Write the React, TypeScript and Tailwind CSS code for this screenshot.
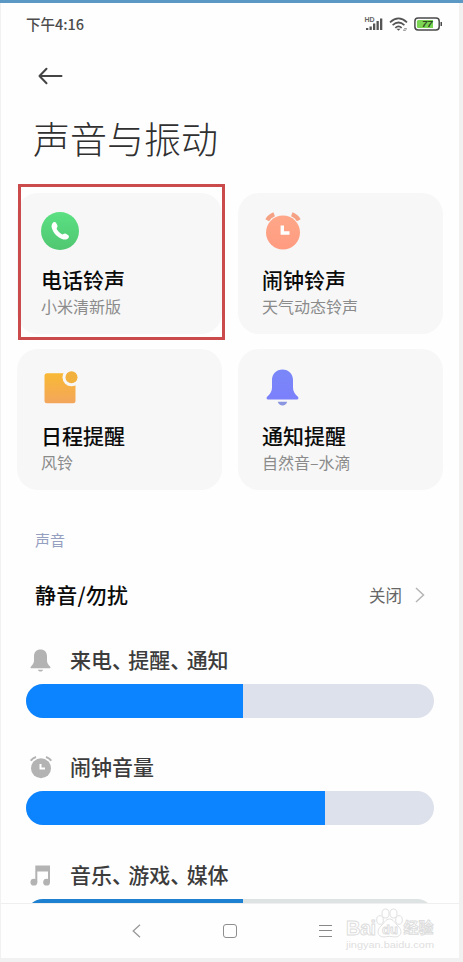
import type { ReactNode } from 'react'

function PhoneIcon() {
  return (
    <svg width="38" height="38" viewBox="0 0 38 38">
      <defs>
        <linearGradient id="phone" x1="0" y1="0" x2="0" y2="1">
          <stop offset="0" stopColor="#5be083" />
          <stop offset="1" stopColor="#50c771" />
        </linearGradient>
      </defs>
      <circle cx="19" cy="19" r="19" fill="url(#phone)" />
      <path
        d="M12.200 10.600c1-.8 2.400-.6 3.100.6l1 2c.5 1 .1 1.800-.4 2.500-.4.7-.3 1.200.1 1.900 1.100 1.900 2.600 3.400 4.500 4.500.7.4 1.200.4 1.900 0 .8-.5 1.600-.8 2.500-.3l2 1.100c1.200.7 1.400 2 .5 3-1.200 1.400-3 2-4.900 1.500-5.700-1.700-9.900-5.900-11.700-11.500-.7-2 .1-4 1.400-5.300z"
        fill="#fff"
      />
    </svg>
  )
}

function ClockIcon() {
  return (
    <svg width="36" height="38" viewBox="0 0 36 38">
      <defs>
        <linearGradient id="clock" x1="0" y1="0" x2="0" y2="1">
          <stop offset="0" stopColor="#ffa788" />
          <stop offset="1" stopColor="#ff9b80" />
        </linearGradient>
      </defs>
      <circle cx="18" cy="20.500" r="17" fill="url(#clock)" />
      <path d="M2.200 8.200Q4.600 4 9.200 2.300" fill="none" stroke="#f5a284" strokeWidth="4.200" />
      <path d="M26.800 2.300Q31.400 4 33.800 8.200" fill="none" stroke="#f5a284" strokeWidth="4.200" />
      <path d="M17.300 13.500V21H24.500" fill="none" stroke="#fff" strokeWidth="3.400" />
    </svg>
  )
}

function NoteIcon() {
  return (
    <svg width="34" height="33" viewBox="0 0 34 33">
      <defs>
        <linearGradient id="note" x1="0" y1="0" x2="0" y2="1">
          <stop offset="0" stopColor="#f9b934" />
          <stop offset="1" stopColor="#f3a65c" />
        </linearGradient>
      </defs>
      <rect x="0.500" y="2.200" width="31" height="30" rx="2.500" fill="url(#note)" />
      <circle cx="27.500" cy="6.300" r="9" fill="#f7f7f7" />
      <circle cx="27.500" cy="6.300" r="6" fill="#f2b03c" />
    </svg>
  )
}

function BellIcon() {
  return (
    <svg width="33" height="37" viewBox="0 0 33 37">
      <defs>
        <linearGradient id="bell" x1="0" y1="0" x2="0" y2="1">
          <stop offset="0" stopColor="#7a87f8" />
          <stop offset="1" stopColor="#7b80fb" />
        </linearGradient>
      </defs>
      <path
        d="M16.500.5C22.600.5 27 5 27 11v7.500c0 4 1.800 6.300 4.900 9.300 1 1.200.6 2.700-1 2.700H2.100c-1.600 0-2-1.500-1-2.700C4.200 24.800 6 22.500 6 18.500V11C6 5 10.400.5 16.500.5z"
        fill="url(#bell)"
      />
      <path d="M11.800 32.800h9.400c-.8 2.500-2.500 3.700-4.700 3.700s-3.900-1.200-4.700-3.700z" fill="#8a96e0" />
    </svg>
  )
}

function SmallBell() {
  return (
    <svg width="21" height="23" viewBox="0 0 21 23">
      <path
        d="M10.500.5C14.400.5 17 3.200 17 7v4.500c0 2.600 1.200 4.200 3.200 6.200.6.700.3 1.600-.7 1.600h-18c-1 0-1.300-.9-.7-1.600C2.800 15.700 4 14.100 4 11.500V7C4 3.200 6.600.5 10.500.5z"
        fill="#b3b3b3"
      />
      <path d="M7.800 20.700h5.400c-.5 1.200-1.400 1.800-2.700 1.800s-2.200-.6-2.700-1.800z" fill="#b3b3b3" />
    </svg>
  )
}

function SmallClock() {
  return (
    <svg width="22" height="23" viewBox="0 0 22 23">
      <circle cx="11" cy="12.300" r="10" fill="#b3b3b3" />
      <path d="M.8 4.700Q2.500 2.200 6 1M16 1Q19.500 2.200 21.200 4.700" fill="none" stroke="#b3b3b3" strokeWidth="2" />
      <path d="M10.500 8V12.600H15" fill="none" stroke="#fff" strokeWidth="2" />
    </svg>
  )
}

function SmallMusic() {
  return (
    <svg width="21" height="21" viewBox="0 0 21 21">
      <path d="M5.300.5H20V17h-2V6.500H7.300V17h-2z" fill="#b3b3b3" />
      <circle cx="3.900" cy="17.200" r="3.400" fill="#b3b3b3" />
      <circle cx="16.600" cy="17.200" r="3.400" fill="#b3b3b3" />
    </svg>
  )
}

function StatusBar() {
  return (
    <div className="flex h-[42px] items-center justify-between pl-[25px] pr-[16px]">
      <span className="text-[14.500px] font-medium text-[#4c4c4c]">下午4:16</span>
      <svg width="79" height="26" viewBox="-1 -4 79 26">
        <text x="-0.500" y="6.500" fontSize="7" fontWeight="700" fontFamily="Liberation Sans" fill="#666">HD</text>
        <g fill="#555">
          <rect x="1" y="13" width="2.300" height="2" />
          <rect x="4.500" y="11.500" width="2.300" height="3.500" />
          <rect x="8" y="8.500" width="2.300" height="6.500" />
          <rect x="11.500" y="6" width="2.300" height="9" />
          <rect x="15" y="3.500" width="2.300" height="11.500" />
        </g>
        <g fill="none" stroke="#555" strokeWidth="1.700">
          <path d="M25 7.300Q33.500-.4 42 7.300" />
          <path d="M27.600 10.100Q33.500 4.900 39.400 10.100" />
          <path d="M30.300 12.800Q33.500 10 36.700 12.800" />
        </g>
        <path d="M31.500 13.800h4l-2 2z" fill="#555" />
        <path d="M38.500 15.500l1-2h2l-1 2z" fill="none" stroke="#777" strokeWidth="0.700" />
        <rect x="49.900" y="3" width="24.300" height="12" rx="3.200" fill="#fff" stroke="#4a4a4a" strokeWidth="1.500" />
        <path d="M53.400 5h14.600v8H53.400a1.500 1.500 0 0 1-1.500-1.500v-5A1.500 1.500 0 0 1 53.400 5z" fill="#7ad552" />
        <rect x="75.500" y="7" width="1.500" height="4" fill="#4a4a4a" />
        <text x="57" y="12.400" fontSize="9.500" fontWeight="700" fontStyle="italic" fontFamily="Liberation Sans" fill="#2f4a22">77</text>
      </svg>
    </div>
  )
}

type CardProps = { icon: ReactNode; title: string; sub: string; selected?: boolean }

function Card({ icon, title, sub, selected }: CardProps) {
  return (
    <div className="relative h-[140.500px] rounded-[21px] bg-[#f7f7f7] pl-6">
      <div className="flex h-[76px] items-center">{icon}</div>
      <div className="h-[24px] text-[21px] font-medium leading-[21px] text-[#0b0b0b]">{title}</div>
      <div className="text-[16px] leading-[27px] text-[#8b8b8b]">{sub}</div>
      {selected && <div className="absolute -top-[9px] left-px h-[156px] w-[207px] border-[3px] border-[#cb4a4b]" />}
    </div>
  )
}

const volumes = [
  { icon: <SmallBell />, words: ['来电', '提醒', '通知'], value: 53.300, fill: 'bg-[#0d84ff]', track: 'bg-[#dde1eb]' },
  { icon: <SmallClock />, words: ['闹钟音量'], value: 73.300, fill: 'bg-[#0d84ff]', track: 'bg-[#dde1eb]' },
  { icon: <SmallMusic />, words: ['音乐', '游戏', '媒体'], value: 53.300, fill: 'bg-[#1d80d0]', track: 'bg-[#dde3e2]' },
]

function Watermark() {
  return (
    <svg className="absolute right-[20px] top-[2px]" width="94" height="48" viewBox="0 0 94 48">
      <g fill="#fff" stroke="#dcdcdc" strokeWidth="0.900">
        <text x="1" y="29" fontSize="20" fontWeight="700" fontFamily="Liberation Sans" textLength="30">Bai</text>
        <ellipse cx="35" cy="14" rx="3.300" ry="4.300" />
        <ellipse cx="40.500" cy="7.500" rx="3.500" ry="4.500" />
        <ellipse cx="48.500" cy="7.500" rx="3.500" ry="4.500" />
        <ellipse cx="54" cy="14" rx="3.300" ry="4.300" />
        <path d="M44.500 13c4 0 5.500 4.500 8.500 7 5 4.500 3.500 11-3 11-2 0-3.500-.7-5.500-.7s-3.500.7-5.500.7c-6.500 0-8-6.500-3-11 3-2.500 4.500-7 8.500-7z" />
        <text x="37" y="28" fontSize="13" fontWeight="700" fontFamily="Liberation Sans">du</text>
        <text x="58.500" y="27" fontSize="15" fontWeight="700">经验</text>
      </g>
      <text x="1" y="42" fontSize="9.500" fontFamily="Liberation Sans" fill="#dedede" textLength="88" lengthAdjust="spacingAndGlyphs">jingyan.baidu.com</text>
    </svg>
  )
}

export default function App() {
  return (
    <div className="h-[962px] w-[463px] overflow-hidden border-t-[3px] border-[#5b99c4] bg-[#f1f1f1] pl-px font-['Noto_Sans_CJK_SC',sans-serif]">
      <div className="flex h-[955px] w-[458px] flex-col bg-[#fefefe]">
        <main className="h-[900px] shrink-0 overflow-hidden">
          <StatusBar />
          <div className="flex h-[62px] items-center pl-[37px]">
            <svg width="25" height="18" viewBox="0 0 25 18" fill="none" stroke="#444" strokeWidth="2" strokeLinecap="round" strokeLinejoin="round">
              <path d="M23.500 9H1.500M8.500 1.800L1.500 9l7 7.200" />
            </svg>
          </div>
          <h1 className="h-[86px] pl-8 text-[37px] font-light leading-[62px] text-[#303030]">声音与振动</h1>

          <div className="grid w-[442px] grid-cols-2 gap-x-4 gap-y-[15.500px] pl-4">
            <Card icon={<PhoneIcon />} title="电话铃声" sub="小米清新版" selected />
            <Card icon={<div className="pl-[3px]"><ClockIcon /></div>} title="闹钟铃声" sub="天气动态铃声" />
            <Card icon={<div className="pl-[3px]"><NoteIcon /></div>} title="日程提醒" sub="风铃" />
            <Card icon={<div className="pl-1"><BellIcon /></div>} title="通知提醒" sub="自然音–水滴" />
          </div>

          <div className="mt-[38.500px] pl-[34px] text-[15px] leading-6 text-[#959fc0]">声音</div>
          <div className="mt-[27px] flex h-[32px] items-center pl-[34px] pr-[34px]">
            <span className="text-[21px] font-medium tracking-[0.200px] text-[#0b0b0b]">静音/勿扰</span>
            <span className="ml-auto mr-[13px] text-[16.500px] text-[#666]">关闭</span>
            <svg width="10" height="16" viewBox="0 0 10 16" fill="none" stroke="#b5b5b5" strokeWidth="1.500">
              <path d="M1 1l7.500 7L1 15" />
            </svg>
          </div>

          <div className="mt-[32.500px]">
            {volumes.map((v) => (
              <div key={v.words[0]} className="h-[107.800px] pl-[25px]">
                <div className="flex h-[40px] items-start">
                  <div className="flex h-[33px] w-[44px] items-center pl-1">{v.icon}</div>
                  <div className="flex text-[21px] font-medium leading-[31px] text-[#3c3c3c]">
                    {v.words.map((w, i) => (
                      <span key={w}>
                        {w}
                        {i < v.words.length - 1 && <span className="tracking-[-4.700px]">、</span>}
                      </span>
                    ))}
                  </div>
                </div>
                <div className={`h-[34px] w-[408px] overflow-hidden rounded-full ${v.track}`}>
                  <div className={`h-full ${v.fill}`} style={{ width: `${v.value}%` }} />
                </div>
              </div>
            ))}
          </div>
        </main>

        <nav className="relative h-[55px] border-t border-[#efefef]">
          <div className="flex h-[53px] items-center pl-[131px]">
            <svg width="9" height="14" viewBox="0 0 9 14" fill="none" stroke="#999" strokeWidth="1.300">
              <path d="M8 .7L1.200 7 8 13.300" />
            </svg>
            <div className="ml-[82px] h-[14px] w-[14px] rounded-[3px] border-[1.500px] border-[#8e8e8e]" />
            <div className="ml-[82px] flex h-[12px] w-[13px] flex-col justify-between">
              <div className="h-px bg-[#888]" />
              <div className="h-px bg-[#888]" />
              <div className="h-px bg-[#888]" />
            </div>
          </div>
          <Watermark />
        </nav>
      </div>
    </div>
  )
}
